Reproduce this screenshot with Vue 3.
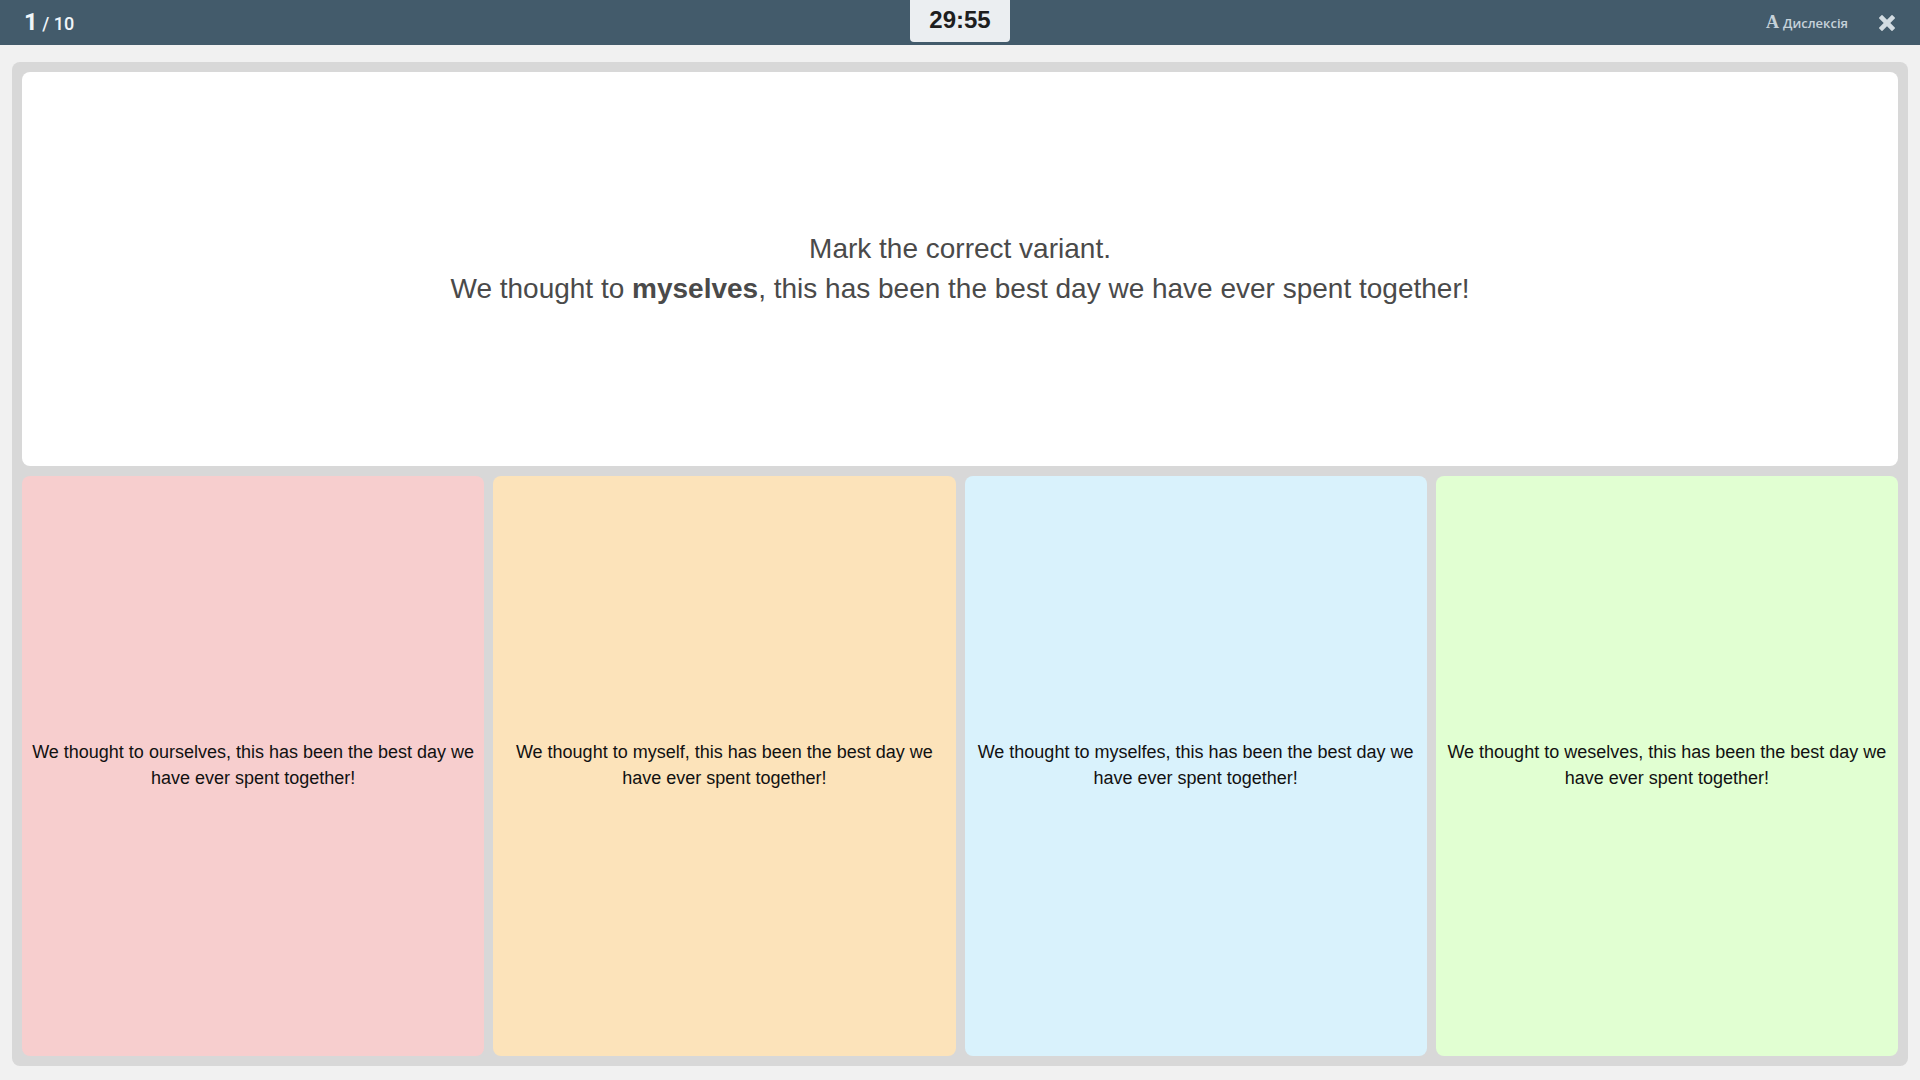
<script setup>
import { ref } from 'vue'

const current = ref(1)
const total = 10
const timeLeft = ref('29:55')
const selected = ref(null)

const options = [
  { tone: 'red', text: 'We thought to ourselves, this has been the best day we have ever spent together!' },
  { tone: 'orange', text: 'We thought to myself, this has been the best day we have ever spent together!' },
  { tone: 'blue', text: 'We thought to myselfes, this has been the best day we have ever spent together!' },
  { tone: 'green', text: 'We thought to weselves, this has been the best day we have ever spent together!' },
]
</script>

<template>
  <div class="page">
    <header class="bar">
      <div class="progress"><strong>{{ current }}</strong> / {{ total }}</div>
      <div class="timer" role="timer">{{ timeLeft }}</div>
      <div class="tools">
        <button type="button" class="dyslexia"><span class="letter">A</span>Дислексія</button>
        <button type="button" class="close" aria-label="Закрити">
          <svg viewBox="0 0 18 18" width="18" height="18" aria-hidden="true">
            <path d="M4.5 1.2 9 5.7 13.5 1.2Q14 .7 14.5 1.2L16.8 3.5Q17.3 4 16.8 4.5L12.3 9 16.8 13.5Q17.3 14 16.8 14.5L14.5 16.8Q14 17.3 13.5 16.8L9 12.3 4.5 16.8Q4 17.3 3.5 16.8L1.2 14.5Q.7 14 1.2 13.5L5.7 9 1.2 4.5Q.7 4 1.2 3.5L3.5 1.2Q4 .7 4.5 1.2Z" />
          </svg>
        </button>
      </div>
    </header>

    <main class="panel">
      <section class="question">
        <p>Mark the correct variant.</p>
        <p>We thought to <strong>myselves</strong>, this has been the best day we have ever spent together!</p>
      </section>
      <div class="options">
        <button
          v-for="(option, index) in options"
          :key="option.tone"
          type="button"
          class="option"
          :class="option.tone"
          :aria-pressed="selected === index"
          @click="selected = index"
        >
          {{ option.text }}
        </button>
      </div>
    </main>
  </div>
</template>

<style>
body {
  margin: 0;
  background: #f1f1f1;
}
</style>

<style scoped>
.page {
  display: flex;
  flex-direction: column;
  min-height: 100vh;
  box-sizing: border-box;
  padding-bottom: 14px;
  background: #f1f1f1;
  font-family: "Liberation Sans", Arial, sans-serif;
}

button {
  border: 0;
  padding: 0;
  background: none;
  font: inherit;
  cursor: pointer;
}

.bar {
  display: grid;
  grid-template-columns: 1fr 100px 1fr;
  height: 45px;
  padding: 0 24px;
  background: #435b6b;
  color: #f0f6fa;
}

.progress {
  align-self: center;
  font-family: Roboto, sans-serif;
  font-size: 18px;
  font-weight: 500;
  line-height: 28px;
}

.progress strong {
  font-size: 24px;
  font-weight: 700;
}

.timer {
  height: 42px;
  border-radius: 0 0 4px 4px;
  background: #ebeef1;
  color: #1e1e1e;
  font-size: 24px;
  font-weight: 700;
  line-height: 40px;
  text-align: center;
}

.tools {
  display: flex;
  align-items: center;
  justify-content: flex-end;
  gap: 30px;
}

.dyslexia {
  display: flex;
  align-items: baseline;
  gap: 4px;
  color: #c6d2da;
  font-family: "Open Sans", "Noto Sans", sans-serif;
  font-size: 13px;
  font-weight: 600;
  line-height: 20px;
}

.letter {
  font-family: "Liberation Serif", serif;
  font-size: 18px;
  font-weight: 700;
}

.close {
  display: flex;
}

.close path {
  fill: #d3dce2;
}

.panel {
  display: grid;
  flex: 1;
  grid-template-rows: 394fr 580fr;
  gap: 10px;
  margin: 17px 12px 0;
  padding: 10px;
  border-radius: 8px;
  background: #d8d8d8;
}

.question {
  display: flex;
  flex-direction: column;
  justify-content: center;
  border-radius: 8px;
  background: #fff;
  color: #4a4a4a;
  font-size: 28px;
  line-height: 40px;
  text-align: center;
}

.question p {
  margin: 0;
}

.options {
  display: grid;
  grid-template-columns: repeat(4, 1fr);
  gap: 9px;
}

.option {
  padding: 0 8px 2px;
  border-radius: 8px;
  color: #111;
  font-size: 18px;
  line-height: 26px;
  text-align: center;
}

.red { background: #f7cece; }
.orange { background: #fce3ba; }
.blue { background: #d9f2fc; }
.green { background: #e1ffd2; }
</style>
